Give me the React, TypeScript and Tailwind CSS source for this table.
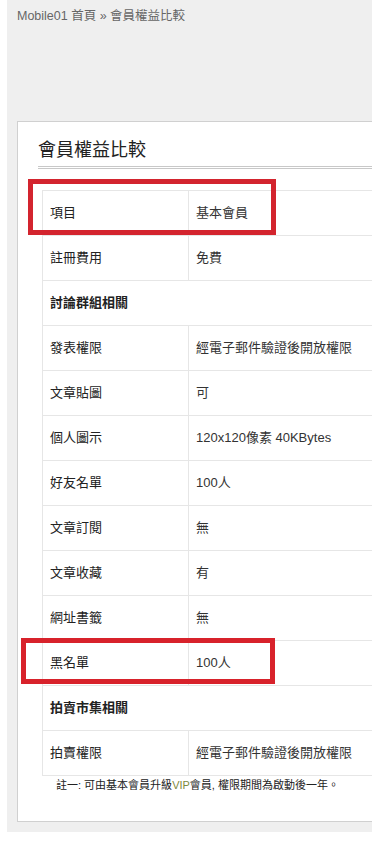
import React from "react";

type Row = { label: string; value?: string; section?: boolean };

const rows: Row[] = [
  { label: "項目", value: "基本會員" },
  { label: "註冊費用", value: "免費" },
  { label: "討論群組相關", section: true },
  { label: "發表權限", value: "經電子郵件驗證後開放權限" },
  { label: "文章貼圖", value: "可" },
  { label: "個人圖示", value: "120x120像素 40KBytes" },
  { label: "好友名單", value: "100人" },
  { label: "文章訂閱", value: "無" },
  { label: "文章收藏", value: "有" },
  { label: "網址書籤", value: "無" },
  { label: "黑名單", value: "100人" },
  { label: "拍賣市集相關", section: true },
  { label: "拍賣權限", value: "經電子郵件驗證後開放權限" },
];

const font = {
  fontFamily: '"Liberation Sans", Arial, "Noto Sans CJK TC", sans-serif',
};

function TableRow({ row }: { row: Row }) {
  if (row.section) {
    return (
      <div className="flex h-[45px] items-center border-t border-[#e6e6e6] pl-[7px] text-[13px] font-bold text-[#222]">
        {row.label}
      </div>
    );
  }
  return (
    <div className="flex h-[45px] border-t border-[#e6e6e6] text-[13px] text-[#222]">
      <div className="flex w-[146px] shrink-0 items-center border-r border-[#e6e6e6] pl-[7px]">
        {row.label}
      </div>
      <div className="flex items-center pl-[7px] text-[#333]">{row.value}</div>
    </div>
  );
}

export default function App() {
  return (
    <div className="relative h-[841px] w-[372px] overflow-hidden bg-white" style={font}>
      <div className="ml-[7px] h-[832px] overflow-hidden bg-[#efefef] pl-[10px] pt-[6px]">
        <div className="h-[20px] whitespace-nowrap text-[12.5px] leading-[20px] text-[#666]">
          Mobile01 首頁 » 會員權益比較
        </div>

        <div className="mt-[95px] w-[400px] border border-[#d0d0d0] bg-white pb-[29px] pl-[20px] pt-[16px]">
          <h1 className="border-b-[3px] border-double border-[#c8c8c8] pb-[4px] text-[18px] leading-[24px] text-[#222]">
            會員權益比較
          </h1>

          <div className="ml-[4px] mt-[21px] border-b border-l border-[#e6e6e6]">
            {rows.map((row, i) => (
              <TableRow key={i} row={row} />
            ))}
          </div>

          <p className="mt-[2px] pl-[18px] text-[11px] leading-[14px] text-[#222]">
            註一: 可由基本會員升級<span className="text-[#7d8a3c]">VIP</span>會員, 權限期間為啟動後一年。
          </p>
        </div>
      </div>

      {/* highlight frames */}
      <div className="absolute left-[28px] top-[179px] h-[56px] w-[248px] border-[5px] border-[#d3242e]" />
      <div className="absolute left-[21px] top-[638px] h-[46px] w-[254px] border-[5px] border-[#d8222b]" />
    </div>
  );
}
